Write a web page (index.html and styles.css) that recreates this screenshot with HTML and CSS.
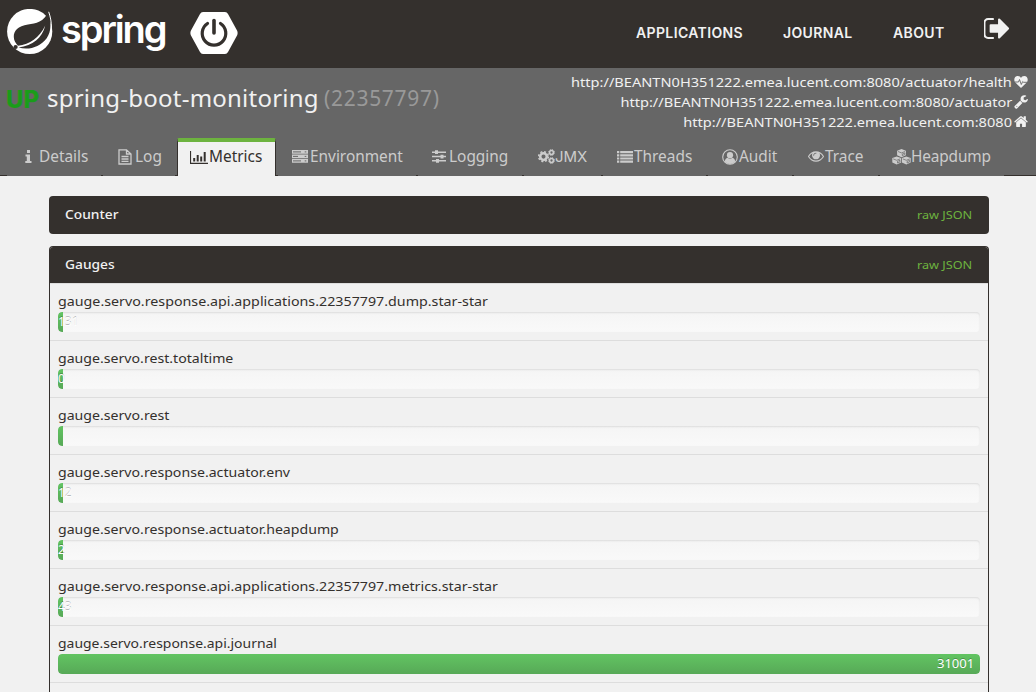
FILE: index.html
```html
<!DOCTYPE html>
<html lang="en">
<head>
<meta charset="utf-8">
<title>Spring Boot Admin</title>
<link rel="stylesheet" href="styles.css">
</head>
<body>
<header class="topbar">
  <a class="brand">
    <svg class="leaf" viewBox="0 0 46 46"><circle cx="22.700" cy="22.500" r="22.600" fill="#fff"/><path d="M41.500 2.500C37 13 29 14.500 21 15.500C11 17 6.500 22 6.800 28C7 32 8.500 34 11 36.800C23 35.500 32 29 38.300 16.500C35 29 26 36.500 11.500 38.500C22 41.500 33 38 39.500 29.500C45 22 44 12 41.500 2.500Z" fill="#34302d"/><circle cx="8.600" cy="38" r="2.100" fill="#34302d"/><path d="M41.700 2.800C45.500 14 45.500 24 41 32" fill="none" stroke="#fff" stroke-width="1"/></svg>
    <span class="wordmark">spring</span>
    <svg class="hex" viewBox="0 0 48 42"><path d="M13 0H35Q37 0 38 2L47.300 19Q48 21 47.300 23L38 40Q37 42 35 42H13Q11 42 10 40L.7 23Q0 21 .7 19L10 2Q11 0 13 0Z" fill="#fff"/><path d="M17.500 11.500A11.800 11.800 0 1 0 30.500 11.500" fill="none" stroke="#34302d" stroke-width="3.200" stroke-linecap="round"/><path d="M24 8.500V21" stroke="#34302d" stroke-width="3.600" stroke-linecap="round"/></svg>
  </a>
  <nav class="nav">
    <a class="n1">APPLICATIONS</a><a class="n2">JOURNAL</a><a class="n3">ABOUT</a>
    <svg class="signout" viewBox="160 256 1472 1280"><path d="M704 1440q0 4 1 20t.5 26.500-3 23.500-10 19.500-20.500 6.500h-320q-119 0-203.500-84.500t-84.500-203.500v-704q0-119 84.500-203.500t203.500-84.500h320q13 0 22.500 9.500t9.500 22.500q0 4 1 20t.5 26.500-3 23.500-10 19.500-20.500 6.500h-320q-66 0-113 47t-47 113v704q0 66 47 113t113 47h312l11.500 1 11.500 3 8 5.500 7 9 2 13.500zm928-544q0 26-19 45l-544 544q-19 19-45 19t-45-19-19-45v-288h-448q-26 0-45-19t-19-45v-384q0-26 19-45t45-19h448v-288q0-26 19-45t45-19 45 19l544 544q19 19 19 45z"/></svg>
  </nav>
</header>
<section class="appbar">
  <div class="summary">
    <h1><b class="up">UP</b><span class="name">spring-boot-monitoring</span><small>(22357797)</small></h1>
    <div class="links">
      <a><span>http://BEANTN0H351222.emea.lucent.com:8080/actuator/health</span><svg viewBox="0 0 14 14"><path d="M7 13L1.300 7.500C-.8 4.800.5 1 3.800 1C5.500 1 6.500 2 7 2.900C7.500 2 8.500 1 10.200 1C13.500 1 14.800 4.800 12.700 7.500Z"/><path d="M.5 7H4.500L5.500 4.500L7.300 9.500L8.700 6.500L9.500 7.300H13.500" fill="none" stroke="#666" stroke-width=".9"/></svg></a>
      <a><span>http://BEANTN0H351222.emea.lucent.com:8080/actuator</span><svg viewBox="40 100 1700 1700"><path d="M448 1472q0-26-19-45t-45-19-45 19-19 45 19 45 45 19 45-19 19-45zm644-420l-682 682q-37 37-90 37-52 0-91-37l-106-108q-38-36-38-90 0-53 38-91l681-681q39 98 114.500 173.500t173.500 114.500zm634-435q0 39-23 106-47 134-164.500 217.500t-258.500 83.500q-185 0-316.500-131.500t-131.500-316.500 131.500-316.500 316.500-131.500q58 0 121.500 16.500t107.500 46.500q16 11 16 28t-16 28l-293 169v224l193 107q5-3 79-48.500t135.500-81 70.500-35.500q15 0 23.500 10t8.500 25z"/></svg></a>
      <a><span>http://BEANTN0H351222.emea.lucent.com:8080</span><svg viewBox="60 200 1670 1500"><path d="M1472 992v480q0 26-19 45t-45 19h-384v-384h-256v384h-384q-26 0-45-19t-19-45v-480q0-1 .5-3t.5-3l575-474 575 474q1 2 1 6zm223-69l-62 74q-8 9-21 11h-3q-13 0-21-7l-692-577-692 577q-12 8-24 7-13-2-21-11l-62-74q-8-10-7-23.500t11-21.500l719-599q32-26 76-26t76 26l244 204v-195q0-14 9-23t23-9h192q14 0 23 9t9 23v408l219 182q10 8 11 21.500t-7 23.500z"/></svg></a>
    </div>
  </div>
  <nav class="tabs">
    <a class="tab t1"><svg width="7" height="13" viewBox="0 0 7 13"><path d="M2 0H5V3H2ZM.5 4.500H5V11H6.500V13H.3V11H1.800V6.500H.5Z"/></svg><span>Details</span></a>
    <a class="tab t2"><svg width="14" height="16" viewBox="0 0 14 16"><path d="M1 .8H8.500L13 5V15H1ZM8.500.8V5H13M3.500 7.500H10.500M3.500 10H10.500M3.500 12.400H10.500" class="line"/></svg><span>Log</span></a>
    <a class="tab t3 active"><svg width="18" height="14" viewBox="0 0 18 14"><path d="M0 1H1.100V12.800H18V14H0ZM3.200 8H5.200V11.500H3.200ZM6.700 5H8.700V11.500H6.700ZM10.200 6.500H12.200V11.500H10.200ZM13.700 2H15.700V11.500H13.700Z"/></svg><span>Metrics</span></a>
    <a class="tab t4"><svg width="16" height="13" viewBox="0 0 16 13"><path d="M0 0H16V3.700H0ZM0 4.500H16V8.200H0ZM0 9H16V12.700H0Z"/><path d="M1 1.900H9M1 6.400H6M1 10.900H9M12.700 1.900H14.300M12.700 6.400H14.300M12.700 10.900H14.300" stroke="#666" fill="none"/></svg><span>Environment</span></a>
    <a class="tab t5"><svg width="14" height="13" viewBox="0 0 14 13"><path d="M0 1.500H14V2.900H0ZM0 5.800H14V7.200H0ZM0 10.100H14V11.500H0Z"/><path d="M3 .3H6V4H3ZM8.500 4.700H11.500V8.400H8.500ZM4 9H7V12.700H4Z"/></svg><span>Logging</span></a>
    <a class="tab t6"><svg width="17" height="15" viewBox="0 0 17 15"><g fill="none" stroke="currentColor"><circle cx="5.500" cy="7.600" r="3.300" stroke-width="2.500"/><circle cx="5.500" cy="7.600" r="4.900" stroke-width="1.500" stroke-dasharray="2 1.848"/><circle cx="13.500" cy="3.500" r="1.900" stroke-width="1.500"/><circle cx="13.500" cy="3.500" r="2.900" stroke-width="1" stroke-dasharray="1.300 .977"/><circle cx="13.500" cy="11.500" r="1.900" stroke-width="1.500"/><circle cx="13.500" cy="11.500" r="2.900" stroke-width="1" stroke-dasharray="1.300 .977"/></g></svg><span>JMX</span></a>
    <a class="tab t7"><svg width="16" height="12" viewBox="0 0 16 12"><path d="M0 0H2.300V2.200H0ZM3.200 0H16V2.200H3.200ZM0 3.200H2.300V5.400H0ZM3.200 3.200H16V5.400H3.200ZM0 6.400H2.300V8.600H0ZM3.200 6.400H16V8.600H3.200ZM0 9.600H2.300V11.800H0ZM3.200 9.600H16V11.800H3.200Z"/></svg><span>Threads</span></a>
    <a class="tab t8"><svg width="16" height="16" viewBox="0 0 16 16"><circle cx="8" cy="8" r="7.300" fill="none" stroke="currentColor" stroke-width="1.100"/><circle cx="8" cy="6.200" r="3.100"/><path d="M2.800 12.500Q3.200 9.200 5.500 8.800Q8 10.800 10.500 8.800Q12.800 9.200 13.200 12.500Q11 15 8 15T2.800 12.500Z"/></svg><span>Audit</span></a>
    <a class="tab t9"><svg width="16" height="11" viewBox="0 384 1792 1152"><path d="M1664 960q-152-236-381-353 61 104 61 225 0 185-131.500 316.500t-316.500 131.500-316.500-131.500-131.500-316.500q0-121 61-225-229 117-381 353 133 205 333.500 326.500t434.500 121.500 434.500-121.500 333.500-326.500zm-720-384q0-20-14-34t-34-14q-125 0-214.500 89.500t-89.500 214.500q0 20 14 34t34 14 34-14 14-34q0-86 61-147t147-61q20 0 34-14t14-34zm848 384q0 34-20 69-140 230-376.500 368.500t-499.500 138.500-499.500-139-376.500-368q-20-35-20-69t20-69q140-229 376.500-368t499.500-139 499.500 139 376.500 368q20 35 20 69z"/></svg><span>Trace</span></a>
    <a class="tab t10"><svg width="19" height="16" viewBox="0 0 19 16"><g id="cube"><path d="M9.500 0L13.900 1.700V6.200L9.500 8.200L5.100 6.200V1.700Z"/><path d="M6 2.500L9.500 3.900L13 2.500M10.300 6.600V4.900L12.800 3.900V5.500Z" fill="none" stroke="#666" stroke-width=".7"/></g><use href="#cube" x="-4.800" y="7.400"/><use href="#cube" x="4.800" y="7.400"/></svg><span>Heapdump</span></a>
  </nav>
</section>
<main>
  <section class="panel"><div class="head"><span>Counter</span><a>raw JSON</a></div></section>
  <section class="panel open"><div class="head"><span>Gauges</span><a>raw JSON</a></div>
    <div class="row"><span class="long">gauge.servo.response.api.applications.22357797.dump.star-star</span><div class="track"><div class="bar">131</div></div></div>
    <div class="row"><span>gauge.servo.rest.totaltime</span><div class="track"><div class="bar">0</div></div></div>
    <div class="row"><span>gauge.servo.rest</span><div class="track"><div class="bar"></div></div></div>
    <div class="row"><span>gauge.servo.response.actuator.env</span><div class="track"><div class="bar">12</div></div></div>
    <div class="row"><span>gauge.servo.response.actuator.heapdump</span><div class="track"><div class="bar">2</div></div></div>
    <div class="row"><span class="long">gauge.servo.response.api.applications.22357797.metrics.star-star</span><div class="track"><div class="bar">43</div></div></div>
    <div class="row"><span class="short">gauge.servo.response.api.journal</span><div class="track"><div class="bar full"><span>31001</span></div></div></div>
    <div class="row last"></div>
  </section>
</main>
</body>
</html>
```
FILE: styles.css
```css
*{box-sizing:border-box}
body{margin:0;height:692px;overflow:hidden;background:#f1f1f1;color:#34302d;font:14px/20px "Noto Sans",sans-serif}
svg{fill:currentColor;flex:none}
.line{fill:none;stroke:currentColor;stroke-width:1.3}
.topbar{height:68px;background:#34302d;display:flex;justify-content:space-between;color:#f1f1f1}
.brand{display:flex;padding-left:7px}
.leaf{width:46px;height:46px;margin-top:9px}
.wordmark{width:105px;margin:3px 0 0 8px;font:600 38px/52px Inter,sans-serif;color:#fff;letter-spacing:-2.1px}
.hex{width:48px;height:42px;margin:12px 0 0 24px}
.nav{display:flex;padding:23px 26px 0 0;font:600 14px/20px Inter,sans-serif;letter-spacing:.37px}
.n1{width:147px}
.n2{width:110px}
.n3{width:91px}
.signout{width:26px;height:21px;margin-top:-5px}
.appbar{height:108px;background:#666;border-bottom:1px solid #34302d;color:#f1f1f1;display:flex;flex-direction:column;justify-content:space-between}
.summary{display:flex;justify-content:space-between;padding:4px 8px 0 6px}
h1{display:flex;margin:6px 0 0;font:400 24px/40px "Noto Sans",sans-serif}
.up{width:41px;padding-top:2px;color:#1a9c1a;font-family:Inter,sans-serif;font-weight:800}
.name{width:277px;letter-spacing:.23px}
small{font-size:21px;letter-spacing:.7px;color:#999}
.links{display:flex;flex-direction:column;align-items:flex-end}
.links a{display:flex;align-items:center;height:20px;gap:2px;font-size:13px}
.links span{transform:scaleX(1.122);transform-origin:right}
.links svg{width:14px;height:14px}
.tabs{display:flex;height:38px;padding-left:7px;margin-bottom:-1px}
.tab{display:flex;align-items:center;height:38px;border-bottom:1px solid #666;color:#ccc;font-size:15.4px;margin-right:2px;white-space:nowrap}
.active{color:#34302d;background:#f1f1f1;border:1px solid #34302d;border-top:4px solid #6db33f;border-bottom:0;border-radius:2px 2px 0 0;padding-bottom:4px}
.t1{width:94px;padding-left:18px}
.t1 svg{margin-right:7px}
.t2{width:72px;padding-left:15px}
.t2 svg{margin-right:3px}
.t3{width:99px;padding-left:12px}
.t3 svg{margin-right:1px}
.t4{width:138px;padding-left:14px}
.t4 svg{margin-right:2px}
.t5{width:104px;padding-left:14px}
.t5 svg{margin-right:3px}
.t6{width:77px;padding-left:14px}
.t6 span{font-family:Inter,sans-serif;font-size:15px}
.t7{width:103px;padding-left:14px}
.t7 svg{margin-right:1px}
.t8{width:84px;padding-left:14px}
.t8 svg{margin-right:1px}
.t9{width:84px;padding-left:14px}
.t9 svg{margin-right:1px}
.t10{width:124px;padding-left:12px}
.t10 span{letter-spacing:-.15px}
main{width:940px;margin:20px 0 0 49px}
.panel{margin-bottom:12px;background:#34302d;border-radius:4px;overflow:hidden}
.head{display:flex;justify-content:space-between;align-items:center;height:38px;padding:0 17px 1px 16px;color:#f1f1f1}
.head span{padding-bottom:1px;font-size:13px;font-weight:500;transform:scaleX(1.06);transform-origin:left}
.head a{font-size:11.5px;color:#6db33f;transform:scaleX(1.1);transform-origin:right;padding-top:1px}
.open{border:1px solid #34302d;border-bottom:0;border-radius:4px 4px 0 0;background:#f1f1f1}
.open .head{height:36px;padding:0 16px 1px 15px;background:#34302d}
.row{height:57px;padding:7px 8px;border-top:1px solid #ddd}
.row.last{height:10px;padding:0}
.row>span{display:block;height:20px;white-space:nowrap;width:max-content;font-size:13px;transform:scaleX(1.087);transform-origin:left}
.row>.long{transform:scaleX(1.097)}
.row>.short{transform:scaleX(1.073)}
.track{height:20px;background:linear-gradient(#f5f5f5,#f9f9f9);box-shadow:inset 0 1px 2px rgba(0,0,0,.1);border-radius:4px;overflow:hidden;margin-top:1px}
.bar{width:5px;height:20px;border-radius:4px 0 0 4px;background:linear-gradient(#62c462,#57a957);color:#fff;font-size:12px;text-shadow:0 -1px 0 rgba(0,0,0,.25)}
.full{width:100%;border-radius:4px;text-align:right;padding-right:6px}
.full span{display:inline-block;transform:scaleX(1.09);transform-origin:right}
```
